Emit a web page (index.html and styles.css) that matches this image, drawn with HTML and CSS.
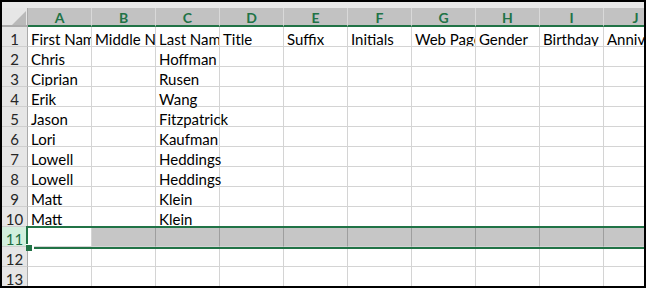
FILE: index.html
```html
<!DOCTYPE html>
<html>
<head>
<meta charset="utf-8">
<link rel="stylesheet" href="styles.css">
</head>
<body>
<div class="frame">
  <div class="band"></div>
  <div class="sheet">
    <div class="corner"><svg width="14" height="14" viewBox="0 0 14 14"><polygon points="14,0 14,14 0,14" fill="#b9b9b9"/></svg></div>
    <div class="ch">A</div><div class="ch">B</div><div class="ch">C</div><div class="ch">D</div><div class="ch">E</div><div class="ch">F</div><div class="ch">G</div><div class="ch">H</div><div class="ch">I</div><div class="ch">J</div>

    <div class="rh">1</div><div class="c">First Name</div><div class="c">Middle Name</div><div class="c">Last Name</div><div class="c">Title</div><div class="c">Suffix</div><div class="c">Initials</div><div class="c">Web Page</div><div class="c">Gender</div><div class="c">Birthday</div><div class="c">Anniversary</div>

    <div class="rh">2</div><div class="c">Chris</div><div class="c"></div><div class="c ov">Hoffman</div><div class="c"></div><div class="c"></div><div class="c"></div><div class="c"></div><div class="c"></div><div class="c"></div><div class="c"></div>
    <div class="rh">3</div><div class="c">Ciprian</div><div class="c"></div><div class="c ov">Rusen</div><div class="c"></div><div class="c"></div><div class="c"></div><div class="c"></div><div class="c"></div><div class="c"></div><div class="c"></div>
    <div class="rh">4</div><div class="c">Erik</div><div class="c"></div><div class="c ov">Wang</div><div class="c"></div><div class="c"></div><div class="c"></div><div class="c"></div><div class="c"></div><div class="c"></div><div class="c"></div>
    <div class="rh">5</div><div class="c">Jason</div><div class="c"></div><div class="c ov">Fitzpatrick</div><div class="c"></div><div class="c"></div><div class="c"></div><div class="c"></div><div class="c"></div><div class="c"></div><div class="c"></div>
    <div class="rh">6</div><div class="c">Lori</div><div class="c"></div><div class="c ov">Kaufman</div><div class="c"></div><div class="c"></div><div class="c"></div><div class="c"></div><div class="c"></div><div class="c"></div><div class="c"></div>
    <div class="rh">7</div><div class="c">Lowell</div><div class="c"></div><div class="c ov">Heddings</div><div class="c"></div><div class="c"></div><div class="c"></div><div class="c"></div><div class="c"></div><div class="c"></div><div class="c"></div>
    <div class="rh">8</div><div class="c">Lowell</div><div class="c"></div><div class="c ov">Heddings</div><div class="c"></div><div class="c"></div><div class="c"></div><div class="c"></div><div class="c"></div><div class="c"></div><div class="c"></div>
    <div class="rh">9</div><div class="c">Matt</div><div class="c"></div><div class="c ov">Klein</div><div class="c"></div><div class="c"></div><div class="c"></div><div class="c"></div><div class="c"></div><div class="c"></div><div class="c"></div>
    <div class="rh">10</div><div class="c">Matt</div><div class="c"></div><div class="c ov">Klein</div><div class="c"></div><div class="c"></div><div class="c"></div><div class="c"></div><div class="c"></div><div class="c"></div><div class="c"></div>

    <div class="rh sel">11</div><div class="c"></div><div class="c hl"></div><div class="c hl"></div><div class="c hl"></div><div class="c hl"></div><div class="c hl"></div><div class="c hl"></div><div class="c hl"></div><div class="c hl"></div><div class="c hl"></div>

    <div class="rh">12</div><div class="c"></div><div class="c"></div><div class="c"></div><div class="c"></div><div class="c"></div><div class="c"></div><div class="c"></div><div class="c"></div><div class="c"></div><div class="c"></div>
    <div class="rh">13</div><div class="c"></div><div class="c"></div><div class="c"></div><div class="c"></div><div class="c"></div><div class="c"></div><div class="c"></div><div class="c"></div><div class="c"></div><div class="c"></div>
  </div>
  <div class="selection"></div>
  <div class="handle"></div>
</div>
</body>
</html>
```

FILE: styles.css
```css
html, body {
  margin: 0;
  padding: 0;
  background: #fff;
}

.frame {
  position: relative;
  width: 646px;
  height: 288px;
  box-sizing: border-box;
  border: 2px solid #000;
  overflow: hidden;
  font-family: Lato, "Open Sans", sans-serif;
  font-size: 15px;
  color: #000;
}

.band {
  height: 6px;
  background: #e9e9e9;
}

.sheet {
  display: grid;
  grid-template-columns: 26px repeat(10, 64px);
  grid-template-rows: 19px;
  grid-auto-rows: 20px;
}

.corner {
  background: #e6e6e6;
  border-right: 1px solid #ababab;
  border-bottom: 2px solid #ababab;
  box-sizing: border-box;
  display: flex;
  align-items: flex-end;
  justify-content: flex-end;
  padding: 0 1px 0 0;
}

.corner svg {
  display: block;
}

.ch {
  background: #c2c2c2;
  border-right: 1px solid #d9d9d9;
  border-bottom: 2px solid #217346;
  box-sizing: border-box;
  color: #217346;
  font-weight: bold;
  font-size: 14px;
  display: flex;
  align-items: center;
  justify-content: center;
  line-height: 1;
  padding-top: 2px;
}

.rh {
  background: #e6e6e6;
  border-right: 1px solid #ababab;
  border-bottom: 1px solid #cfcfcf;
  box-sizing: border-box;
  color: #262626;
  font-size: 15px;
  display: flex;
  align-items: center;
  justify-content: center;
  line-height: 1;
  padding-top: 5px;
}

.rh.sel {
  background: #d2efdd;
  color: #1d6b41;
}

.c {
  border-right: 1px solid #d4d4d4;
  border-bottom: 1px solid #d4d4d4;
  box-sizing: border-box;
  padding: 5px 0 0 3px;
  white-space: nowrap;
  overflow: hidden;
  display: flex;
  align-items: center;
  line-height: 1;
}

.c.ov {
  overflow: visible;
}

.c.hl {
  background: #c6c6c6;
  border-right-color: #9e9e9e;
}

.selection {
  position: absolute;
  left: 24px;
  top: 224px;
  width: 700px;
  height: 23px;
  box-sizing: border-box;
  border: 2px solid #217346;
}

.handle {
  position: absolute;
  left: 24px;
  top: 242px;
  width: 6px;
  height: 6px;
  background: #217346;
  border-right: 2px solid #fff;
  border-top: 1px solid #fff;
}
```
